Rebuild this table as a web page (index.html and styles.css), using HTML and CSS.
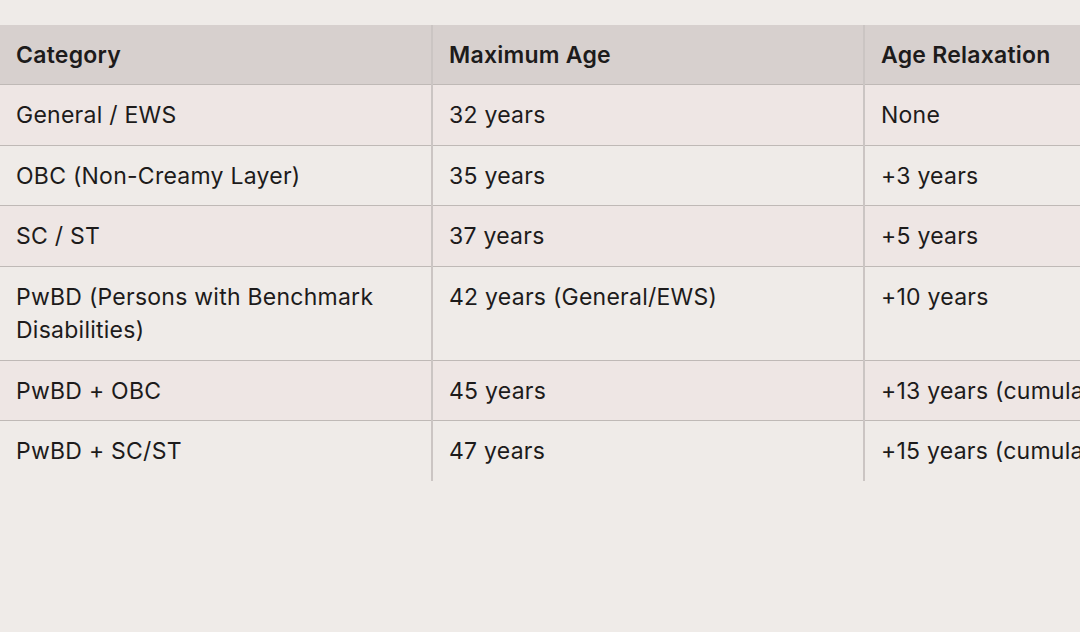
FILE: index.html
```html
<!DOCTYPE html>
<html>
<head>
<meta charset="utf-8">
<link rel="stylesheet" href="styles.css">
</head>
<body>
<div class="wrap">
<table class="age-table">
  <colgroup><col class="c"><col class="c"><col class="c"></colgroup>
  <thead>
    <tr><th>Category</th><th>Maximum Age</th><th>Age Relaxation</th></tr>
  </thead>
  <tbody>
    <tr class="odd"><td>General / EWS</td><td>32 years</td><td>None</td></tr>
    <tr><td>OBC (Non-Creamy Layer)</td><td>35 years</td><td>+3 years</td></tr>
    <tr class="odd"><td>SC / ST</td><td>37 years</td><td>+5 years</td></tr>
    <tr class="tall"><td>PwBD (Persons with Benchmark Disabilities)</td><td>42 years (General/EWS)</td><td>+10 years</td></tr>
    <tr class="odd"><td>PwBD + OBC</td><td>45 years</td><td>+13 years (cumulative)</td></tr>
    <tr class="last"><td>PwBD + SC/ST</td><td>47 years</td><td>+15 years (cumulative)</td></tr>
  </tbody>
</table>
</div>
</body>
</html>
```
FILE: styles.css
```css
html, body {
  margin: 0;
  padding: 0;
  background: #efebe8;
  overflow: hidden;
}
.wrap {
  padding-top: 25px;
  width: 1080px;
  height: 632px;
  overflow: hidden;
  box-sizing: border-box;
}
.age-table {
  border-collapse: collapse;
  table-layout: fixed;
  width: 1296px;
  font-family: Inter, "Liberation Sans", sans-serif;
  font-size: 23px;
  letter-spacing: 0.25px;
  line-height: 33px;
  color: #1d1b1b;
}
.age-table col.c {
  width: 432px;
}
.age-table th, .age-table td {
  text-align: left;
  vertical-align: top;
  padding: 14px 15px 12.5px 16px;
  border-bottom: 1px solid #bfb9b6;
  border-left: 2px solid #cbc5c3;
  white-space: nowrap;
  overflow: hidden;
}
.age-table th:first-child, .age-table td:first-child {
  border-left: none;
}
.age-table th {
  background: #d7d0ce;
  font-weight: 600;
  padding-bottom: 12px;
}
.age-table tr.tall td {
  white-space: normal;
  padding-bottom: 13px;
}
.age-table tr.odd td {
  background: #eee6e4;
}
.age-table tr.last td {
  border-bottom: none;
}
```
